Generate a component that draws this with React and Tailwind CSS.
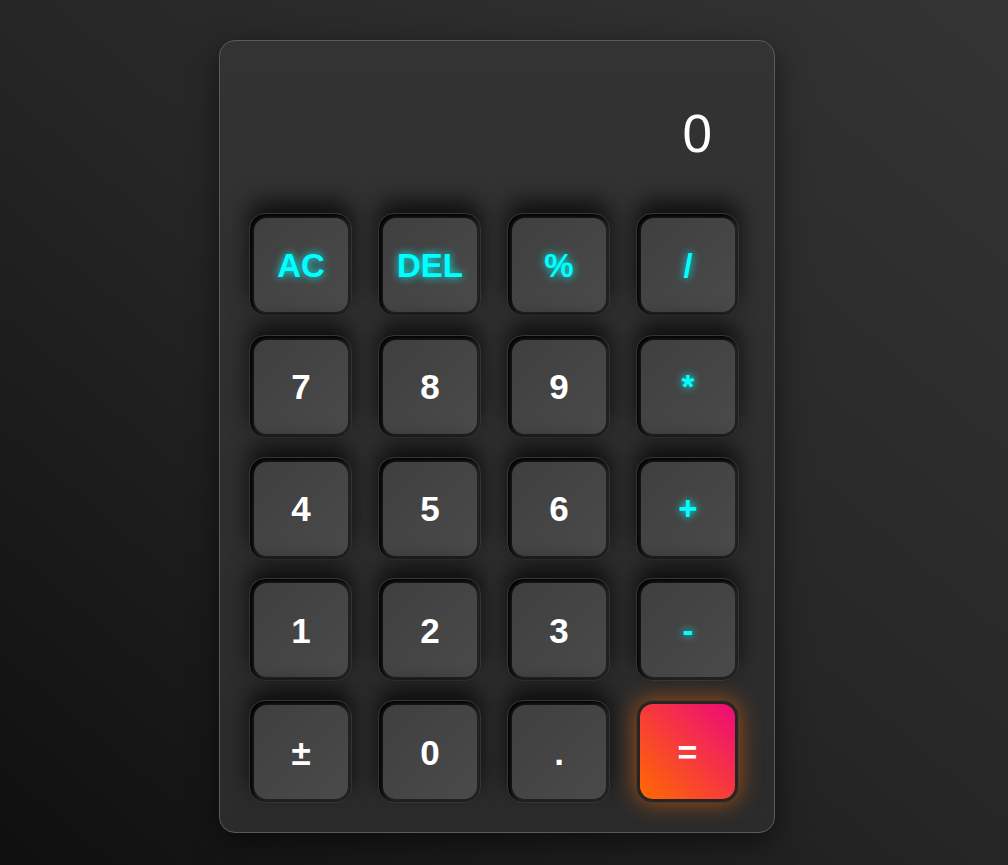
import React from 'react';

const keys = [
  { label: 'AC', op: true },
  { label: 'DEL', op: true },
  { label: '%', op: true },
  { label: '/', op: true },
  { label: '7' },
  { label: '8' },
  { label: '9' },
  { label: '*', op: true },
  { label: '4' },
  { label: '5' },
  { label: '6' },
  { label: '+', op: true },
  { label: '1' },
  { label: '2' },
  { label: '3' },
  { label: '-', op: true },
  { label: '±' },
  { label: '0' },
  { label: '.' },
  { label: '=', equals: true },
];

const Key = ({ label, op, equals }) => {
  if (equals) {
    return (
      <button
        type="button"
        className="w-[103px] h-[103px] rounded-[16px] border border-[#4a3a30] bg-[#2a2320] p-[3px] shadow-[0_0_22px_rgba(255,106,0,0.55)]"
      >
        <div className="w-full h-full rounded-[13px] bg-[linear-gradient(to_top_right,#ff6a00,#ee0979)] flex items-center justify-center text-white font-bold text-[34px] leading-none">
          {label}
        </div>
      </button>
    );
  }
  return (
    <button
      type="button"
      className="w-[103px] h-[103px] rounded-[16px] border border-[#353535] bg-[#222] pt-[4px] pl-[4px] pr-[3px] pb-[3px] shadow-[0_-12px_22px_rgba(0,0,0,0.7),inset_3px_3px_5px_#000]"
    >
      <div
        className={
          'w-full h-full rounded-[13px] bg-[linear-gradient(to_bottom_right,#3f3f3f,#4a4a4a)] flex items-center justify-center font-bold leading-none ' +
          (op ? 'text-[33px] text-[#00ffff] [text-shadow:0_0_8px_#00ffff]' : 'text-[35px] text-white')
        }
      >
        {label}
      </div>
    </button>
  );
};

export default function App() {
  return (
    <div
      className="min-h-screen w-full bg-[linear-gradient(to_top_right,#0f0f0f,#262626_50%,#343434)] pt-[40px] pl-[219px]"
      style={{ fontFamily: '"Liberation Sans", Arial, sans-serif' }}
    >
      <div className="w-[556px] h-[793px] rounded-[16px] border border-[#5a5a5a] bg-[linear-gradient(to_bottom,#333,#2b2b2b)] shadow-[0_10px_30px_rgba(0,0,0,0.5)]">
        <div className="h-[172px] flex items-center justify-end pr-[62px] pt-[12px] text-white text-[53px] leading-none">
          0
        </div>
        <div className="grid grid-cols-[repeat(4,103px)] gap-x-[26px] gap-y-[18.75px] pl-[29px]">
          {keys.map((k) => (
            <Key key={k.label} {...k} />
          ))}
        </div>
      </div>
    </div>
  );
}
